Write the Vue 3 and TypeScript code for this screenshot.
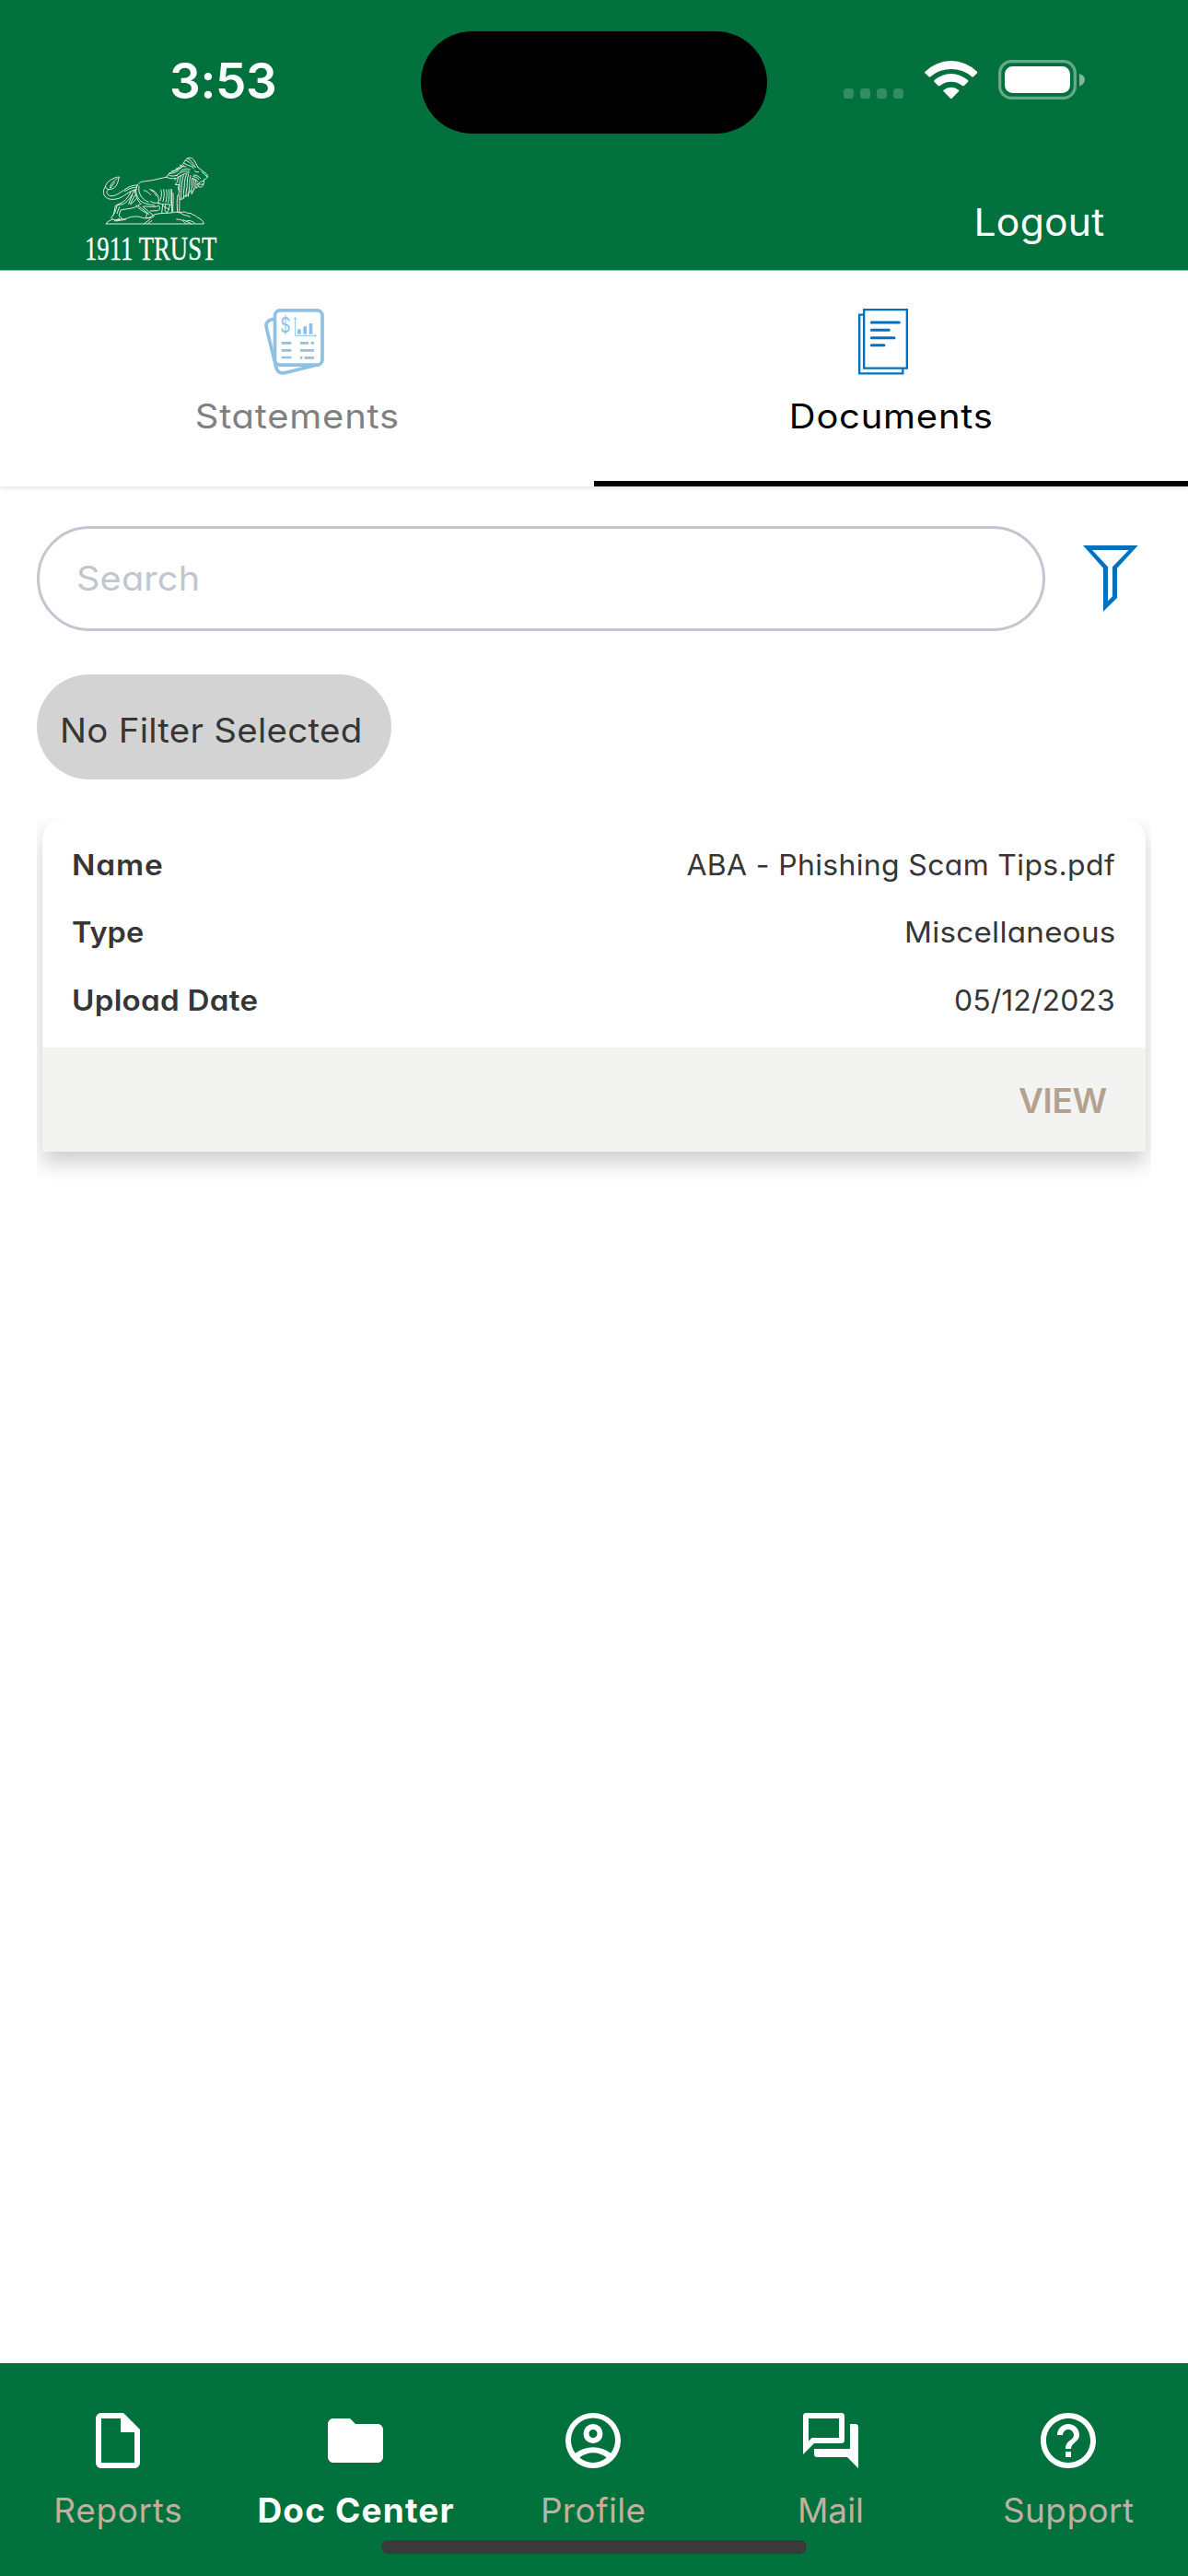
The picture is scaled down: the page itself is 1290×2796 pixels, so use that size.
<script setup lang="ts">
interface TextFit {
  scale: number
  spacing: number
}
interface Field {
  label: string
  value: string
  labelFit: TextFit
  valueFit: TextFit
}
interface NavItem {
  label: string
  icon: string
  spacing: string
  active?: boolean
}

const fields: Field[] = [
  {
    label: 'Name',
    value: 'ABA - Phishing Scam Tips.pdf',
    labelFit: { scale: 1.08, spacing: 0.8 },
    valueFit: { scale: 1.03, spacing: 0.35 },
  },
  {
    label: 'Type',
    value: 'Miscellaneous',
    labelFit: { scale: 1.05, spacing: 0 },
    valueFit: { scale: 1.07, spacing: 0.25 },
  },
  {
    label: 'Upload Date',
    value: '05/12/2023',
    labelFit: { scale: 1.07, spacing: 0.25 },
    valueFit: { scale: 1.03, spacing: 0.1 },
  },
]

// Widens a label without changing its height.
const fit = ({ scale, spacing }: TextFit) => ({
  transform: `scaleX(${scale})`,
  letterSpacing: `${spacing}px`,
  marginRight: `${-spacing}px`,
})

const nav: NavItem[] = [
  {
    label: 'Reports',
    spacing: '0.68px',
    icon: 'M6 2c-1.1 0-2 .9-2 2v16c0 1.1.9 2 2 2h12c1.1 0 2-.9 2-2V8l-6-6H6zM6 4h7v5h5v11H6V4z',
  },
  {
    label: 'Doc Center',
    spacing: '1.15px',
    active: true,
    icon: 'M10 4H4c-1.1 0-2 .9-2 2v12c0 1.1.9 2 2 2h16c1.1 0 2-.9 2-2V8c0-1.1-.9-2-2-2h-8l-2-2z',
  },
  {
    label: 'Profile',
    spacing: '0.3px',
    icon: 'M12 2a10 10 0 1 0 0 20a10 10 0 1 0 0-20zM12 20c-1.85 0-3.55-.7-4.9-1.8C8.4 17.1 10.1 16.45 12 16.45s3.6.65 4.9 1.75C15.55 19.3 13.85 20 12 20zM18.4 16.6C16.6 15.2 14.5 14.45 12 14.45s-4.6.75-6.4 2.15A8 8 0 1 1 18.4 16.6zM12 6a3.5 3.5 0 1 0 0 7a3.5 3.5 0 1 0 0-7zM12 11a1.5 1.5 0 1 1 0-3a1.5 1.5 0 1 1 0 3z',
  },
  {
    label: 'Mail',
    spacing: '0px',
    icon: 'M15 4v7H5.17L4 12.17V4h11m1-2H3c-.55 0-1 .45-1 1v14l4-4h10c.55 0 1-.45 1-1V3c0-.55-.45-1-1-1zm5 4h-2v9H6v2c0 .55.45 1 1 1h11l4 4V7c0-.55-.45-1-1-1z',
  },
  {
    label: 'Support',
    spacing: '0.4px',
    icon: 'M11 18h2v-2h-2v2zm1-16C6.48 2 2 6.48 2 12s4.48 10 10 10 10-4.48 10-10S17.52 2 12 2zm0 18c-4.41 0-8-3.59-8-8s3.59-8 8-8 8 3.59 8 8-3.59 8-8 8zm0-14c-2.21 0-4 1.79-4 4h2c0-1.1.9-2 2-2s2 .9 2 2c0 2-3 1.75-3 5h2c0-2.25 3-2.5 3-5 0-2.21-1.79-4-4-4z',
  },
]
</script>

<template>
  <div class="screen">
    <header class="header">
      <div class="status">
        <div class="clock">3:53</div>
        <div class="island"></div>
        <div class="indicators">
          <svg class="dots" viewBox="0 0 65 11"><rect v-for="i in 4" :key="i" :x="(i - 1) * 18" width="11" height="11" rx="3.6" /></svg>
          <svg class="wifi" viewBox="0 0 173 126">
            <path d="M1 39A120 120 0 0 1 172 39Q174 41 172 43L159 55Q157 57 154 55A103 103 0 0 0 19 55Q16 57 14 55L1 43Q-1 41 1 39Z" />
            <path d="M32 66A82 82 0 0 1 141 66Q144 69 141 72L129 84Q126 86 123 84A58 58 0 0 0 50 84Q47 86 44 84L32 72Q29 69 32 66Z" />
            <path d="M62 98A39 39 0 0 1 111 98Q114 101 111 103L89 125Q86.5 127 84 125L62 103Q59 101 62 98Z" />
          </svg>
          <svg class="battery" viewBox="0 0 94 43">
            <rect x="1.7" y="1.7" width="81.6" height="39.6" rx="12.5" class="shell" />
            <rect x="7" y="7" width="71" height="29" rx="8.5" />
            <path class="nub" d="M88 15C91.5 16 94 18.5 94 21.5S91.5 27.5 88 28.5Z" />
          </svg>
        </div>
      </div>
      <div class="brandbar">
        <svg class="logo" viewBox="0 0 510 399" role="img" aria-label="1911 Trust">
          <g class="lines">
            <path d="M147 96C134 96 108 110 104 125C103 132 108 137 117 137C129 137 141 125 144 112ZM141 102C130 109 119 120 118 131M134 113C128 120 124 127 120 133" />
            <path d="M104 127C95 138 95 151 102 159C113 173 135 171 154 163C170 155 184 139 204 137M113 137C104 144 107 155 119 158C139 161 159 140 178 130C188 125 196 123 208 123M166 143C180 134 193 129 205 130" />
            <path d="M208 123C211 115 222 110 236 110C262 107 286 100 304 96" />
            <path d="M207 124C198 142 205 165 222 177C233 185 250 186 264 189M213 126C209 148 220 169 244 178M198 138C201 157 207 171 216 181" />
            <path d="M248 137C266 138 282 158 276 184M229 140C239 142 246 148 250 154M253 140C262 146 267 151 269 158M250 175C256 181 265 182 274 180" />
            <path d="M284 138C289 150 285 162 282 173M293 137C297 150 294 164 291 176M302 138C306 151 303 165 300 178M310 137C313 151 311 165 308 180M318 137C320 151 318 165 317 181M276 182C290 187 303 183 318 187" />
            <path d="M196 141C189 160 177 176 161 185L142 188L134 212L122 230C129 238 148 238 158 232L147 222L153 204C172 199 193 201 208 190C212 185 217 185 220 184M187 143C178 163 164 180 147 184L136 190L130 219M191 155L179 184M199 156L184 185M204 167L188 184M149 194L141 215" />
            <path d="M202 188C215 203 228 209 240 216L235 227C243 232 257 230 262 223L243 208L225 193C240 189 258 198 278 190C283 198 280 204 272 206L250 207M211 190L246 218" />
            <path d="M318 137L320 210M324 149C326 170 322 190 323 209M339 155C335 170 337 190 338 210M345 168L344 213M290 186L287 214M299 188C298 200 294 206 303 212M313 188C311 200 309 207 304 213M291 190L310 202" />
            <path d="M302 97C311 101 321 103 332 100M308 89C315 95 327 94 338 90M304 94C312 79 328 80 338 68C349 63 355 57 359 50C365 36 375 30 386 36C396 43 399 56 405 65M311 84C321 87 335 80 342 75M320 76C329 79 343 70 352 65M333 69C342 73 352 66 360 58M359 50C367 60 379 56 391 68M365 42C375 46 385 54 391 63M370 36C382 41 389 51 397 65M347 78C356 70 369 69 379 72M334 92C345 82 359 75 376 78M329 106C342 95 357 84 375 83M346 57C352 61 359 63 366 63" />
            <path d="M405 65L419 76C426 82 433 85 436 91C438 99 431 103 425 104C424 112 424 118 421 125C415 133 405 129 404 121C407 115 415 110 424 109M407 80C401 82 398 79 394 77M417 79L435 96M404 119C409 119 415 122 421 120M405 113C402 106 394 102 386 101M389 95C397 95 403 99 408 104M391 90C401 90 408 95 413 101" />
            <path d="M342 94C337 106 340 116 330 121L345 122C336 131 341 139 346 143M350 91C342 112 347 128 343 143C340 155 347 164 345 169M358 90C351 110 352 132 350 148C348 158 352 165 350 171L363 157M367 88C359 108 362 125 359 141C357 151 359 158 359 166M374 87C367 108 372 124 367 142L365 161L382 140M381 92C375 109 380 120 376 138C374 146 375 153 373 160M386 101C383 113 389 121 384 136L384 152L392 137M392 104C390 117 396 122 392 137M397 107C398 115 401 122 398 132C402 132 405 130 407 126" />
            <path d="M106 249H424C423 240 414 232 403 228C397 219 389 222 381 214C371 217 365 208 354 210C346 215 334 207 325 212C303 215 285 213 264 218L246 229C230 235 214 223 202 225C180 225 170 235 158 234M106 249C109 239 119 239 126 234M132 240L149 232M230 248L249 234M243 247L254 239M348 214C360 223 371 220 379 226M335 234C349 234 359 238 365 248M357 236L382 248M369 239C379 237 387 240 394 246M139 240C151 236 161 238 170 234" />
          </g>
          <text x="36" y="366" textLength="430" lengthAdjust="spacingAndGlyphs">1911 TRUST</text>
        </svg>
        <a class="logout">Logout</a>
      </div>
    </header>

    <nav class="tabs">
      <div class="tab">
        <svg class="ico-statements" viewBox="0 0 195 216">
          <path class="o" d="M31 34C12 36 3 47 7 62L39 193C43 207 52 212 66 209L181 181" />
          <rect class="o f" x="34.5" y="5.5" width="154.5" height="178" rx="17" />
          <path class="thin" d="M101 30V88H168M97 34L101 29L105 34M164 84L169 88L164 92" />
          <path class="bars" d="M108 67h11v16h-11zM127 58h11v25h-11zM146 48h11v35h-11z" />
          <path class="rows" d="M56 112H88M56 136H88M56 159H88M117 112H144M152 112H162M117 136H162M117 160H124M131 160H162" />
          <text x="52" y="78" textLength="34" lengthAdjust="spacingAndGlyphs">$</text>
        </svg>
        <span class="tab-label">Statements</span>
      </div>
      <div class="tab active">
        <svg class="ico-documents" viewBox="0 0 162 216">
          <path d="M18 20H3.5V211H145V196M18.5 3.5H158.5V194H18.5Z" />
          <path class="ln" d="M43 45H133M43 70H100M43 95H117M43 119H84" />
        </svg>
        <span class="tab-label">Documents</span>
      </div>
    </nav>

    <main class="content">
      <div class="search-row">
        <div class="search"><span>Search</span></div>
        <svg class="funnel" viewBox="0 0 179 215">
          <path fill-rule="evenodd" d="M0 0H179L111 74V171L66 215V74ZM30 15L81 70V181L96 166V70L149 15Z" />
        </svg>
      </div>
      <div class="chip"><span>No Filter Selected</span></div>
      <div class="card-clip">
        <article class="card">
          <div class="card-body">
            <div v-for="f in fields" :key="f.label" class="field">
              <b :style="fit(f.labelFit)">{{ f.label }}</b>
              <span :style="fit(f.valueFit)">{{ f.value }}</span>
            </div>
          </div>
          <div class="card-footer"><a class="view">VIEW</a></div>
        </article>
      </div>
    </main>

    <footer class="bottom-nav">
      <div v-for="n in nav" :key="n.label" class="nav-item" :class="{ active: n.active }">
        <svg viewBox="0 0 24 24"><path :d="n.icon" /></svg>
        <span :style="{ letterSpacing: n.spacing, marginRight: `calc(-1 * ${n.spacing})` }">{{ n.label }}</span>
      </div>
      <div class="home-indicator"></div>
    </footer>
  </div>
</template>

<style>
body { margin: 0; }
</style>

<style scoped>
.screen {
  width: 1290px;
  height: 2796px;
  display: flex;
  flex-direction: column;
  overflow: hidden;
  background: #fff;
  color: #363636;
  font-family: Inter, 'Noto Sans', sans-serif;
  font-feature-settings: 'cv11';
}
svg { display: block; flex: none; }
.header {
  height: 293px;
  flex: none;
  background: #00703c;
  border-bottom: 1px solid #a5b5ac;
  color: #fff;
}
.status {
  height: 160px;
  display: flex;
  align-items: flex-start;
}
.clock {
  width: 457px;
  padding: 56px 0 0 184px;
  box-sizing: border-box;
  font-size: 53px;
  line-height: 64px;
  font-weight: 600;
  letter-spacing: -0.3px;
}
.island {
  width: 376px;
  height: 111px;
  margin-top: 34px;
  border-radius: 56px;
  background: #000;
}
.indicators {
  display: flex;
  padding: 65px 0 0 83px;
}
.indicators svg { fill: #fff; }
.dots { width: 65px; height: 11px; margin-top: 31px; opacity: 0.2; }
.wifi { width: 57.6px; height: 42px; margin-left: 22.6px; }
.battery { width: 94px; height: 43px; margin-left: 22.8px; }
.shell { fill: none; stroke: #fff; stroke-width: 3.3; opacity: 0.4; }
.nub { opacity: 0.5; }
.brandbar {
  height: 133px;
  display: flex;
  justify-content: space-between;
  padding: 0 91px 0 80px;
}
.logo { width: 170px; height: 133px; overflow: visible; }
.lines {
  fill: none;
  stroke: #fff;
  stroke-width: 2.9;
  stroke-opacity: 0.9;
  stroke-linecap: round;
  stroke-linejoin: round;
}
.logo text {
  font: 109px 'Liberation Serif', serif;
  fill: #fff;
  stroke: #fff;
  stroke-width: 1;
}
.logout {
  margin: 54.5px 0 0;
  font-size: 41px;
  line-height: 52px;
  letter-spacing: 0.2px;
  transform: scaleX(1.04);
  transform-origin: right;
}
.tabs {
  height: 234px;
  flex: none;
  display: flex;
  box-shadow: 0 3px 3px rgba(0, 0, 0, 0.07);
}
.tab {
  width: 645px;
  box-sizing: border-box;
  padding-top: 41px;
  display: flex;
  flex-direction: column;
  align-items: center;
  color: #808080;
}
.tab.active {
  color: #000;
  border-bottom: 6px solid #000;
}
.tab-label {
  margin: 20px -0.7px 0 0;
  font-size: 37px;
  line-height: 50px;
  letter-spacing: 0.7px;
  transform: scaleX(1.08);
}
.ico-statements { width: 65px; height: 72px; margin-right: 6px; }
.ico-statements .o { fill: none; stroke: #8fc1e2; stroke-width: 11; }
.ico-statements .f { fill: #fff; }
.ico-statements text { font: 68px Inter, sans-serif; fill: #8fc1e2; }
.thin { fill: none; stroke: #8fc1e2; stroke-width: 3; }
.bars { fill: #8fc1e2; }
.rows { stroke: #8fc1e2; stroke-width: 8; }
.ico-documents {
  width: 54px;
  height: 72px;
  margin-right: 17px;
  fill: none;
  stroke: #0071bd;
  stroke-width: 7;
}
.ico-documents .ln { stroke-width: 9; stroke-linecap: round; }
.content { flex: 1; padding: 43px 40px 0; }
.search-row { display: flex; }
.search {
  width: 1095px;
  height: 114px;
  box-sizing: border-box;
  border: 3px solid #c1c6cf;
  border-radius: 57px;
  padding-left: 40px;
  font-size: 37px;
  line-height: 108px;
  letter-spacing: 0.2px;
  color: #c1c6cf;
}
.search span {
  display: inline-block;
  transform: scaleX(1.07);
  transform-origin: left;
}
.funnel { width: 59.7px; height: 71.7px; margin: 21px 0 0 41px; fill: #0071bd; }
.chip {
  width: 385px;
  height: 114px;
  margin-top: 47px;
  box-sizing: border-box;
  padding: 7px 0 0 25px;
  border-radius: 57px;
  background: #d3d3d3;
  font-size: 37px;
  line-height: 107px;
  letter-spacing: 0.25px;
  white-space: nowrap;
}
.chip span {
  display: inline-block;
  transform: scaleX(1.04);
  transform-origin: left;
}
.card-clip {
  width: 1210px;
  height: 440px;
  margin-top: 42px;
  padding: 0 6px;
  box-sizing: border-box;
  overflow: hidden;
}
.card {
  height: 362px;
  border-radius: 24px 24px 3px 3px;
  box-shadow: 0 12px 24px rgba(0, 0, 0, 0.2);
  background: #fff;
  overflow: hidden;
}
.card-body {
  height: 249px;
  box-sizing: border-box;
  padding: 14px 33px 0 32px;
}
.field {
  height: 73.5px;
  display: flex;
  justify-content: space-between;
  align-items: center;
  font-size: 31px;
  line-height: 40px;
}
.field b { font-weight: 600; transform-origin: left; }
.field span { transform-origin: right; }
.card-footer {
  height: 113px;
  display: flex;
  justify-content: flex-end;
  align-items: center;
  padding: 0 42px 0 0;
  background: #f3f3f1;
}
.view {
  margin-top: 2px;
  color: #b5a18f;
  font-size: 37px;
  font-weight: 600;
  letter-spacing: -0.3px;
}
.bottom-nav {
  height: 231px;
  flex: none;
  position: relative;
  display: flex;
  background: #00703c;
  color: #bfb0a2;
  font-feature-settings: normal;
}
.nav-item {
  width: 258px;
  box-sizing: border-box;
  padding: 48px 2px 0 0;
  display: flex;
  flex-direction: column;
  align-items: center;
  font-size: 37px;
  line-height: 50px;
}
.nav-item svg { width: 72px; height: 72px; fill: #fff; }
.nav-item span { margin-top: 14.5px; white-space: nowrap; }
.nav-item.active { color: #fff; font-weight: 700; }
.home-indicator {
  position: absolute;
  left: 414px;
  top: 192px;
  width: 462px;
  height: 15px;
  border-radius: 8px;
  background: #3a3a3a;
}
</style>
